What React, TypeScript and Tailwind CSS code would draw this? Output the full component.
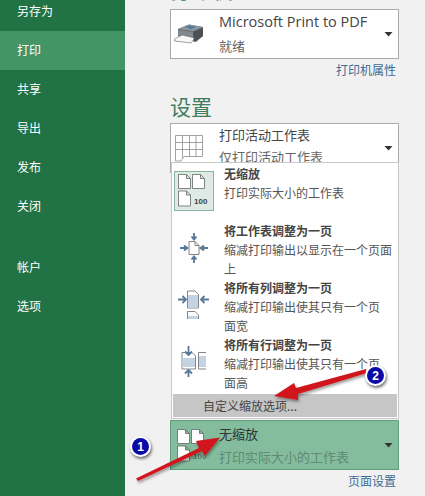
const CJK = "font-['Noto_Sans_CJK_SC','Noto_Sans',sans-serif]";

function Caret() {
  return (
    <svg width="9" height="6" viewBox="0 0 9 6" className="shrink-0">
      <path d="M0.5 1H8.5L4.5 5.5Z" fill="#333" />
    </svg>
  );
}

function Printer() {
  return (
    <svg width="30" height="20" viewBox="0 0 30 20">
      <path d="M4 5 L15 0.5 L29 3 L29 12 L22 18 L4 12Z" fill="#666c72" />
      <path d="M4 5 L15 0.5 L29 3 L19 7Z" fill="#8f979e" />
      <path d="M11 3 L16 1.5 L22 3 L17 5Z" fill="#4b7aa3" />
      <path d="M4 6 L19 8 L19 15 L4 11Z" fill="#82888e" />
      <path d="M0.5 15 L8 11 L21 14 L17 19 L0.5 17Z" fill="#f7f7f7" stroke="#666" strokeWidth="0.6" />
      <path d="M19 8 L29 4 L29 12 L20 18Z" fill="#4c5156" />
    </svg>
  );
}

function SheetIcon() {
  return (
    <svg width="29" height="27" viewBox="0 0 29 27" fill="none" stroke="#999" strokeWidth="0.9">
      <path d="M0.5 0.5H27.5V21.5H9L6 26H0.5Z" fill="#fff" />
      <path d="M0.5 7.5H27.5M0.5 14.5H27.5M7.5 0.5V23M14.5 0.5V21.5M21 0.5V21.5" />
    </svg>
  );
}

function Page({ x, y, w = 12, h = 14, fill = "#fff" }: { x: number; y: number; w?: number; h?: number; fill?: string }) {
  return (
    <path
      d={`M${x} ${y}H${x + w - 4}L${x + w} ${y + 4}V${y + h}H${x}Z M${x + w - 4} ${y}V${y + 4}H${x + w}`}
      fill={fill}
      stroke="#666"
      strokeWidth="0.8"
    />
  );
}

function NoScale({ muted }: { muted?: boolean }) {
  return (
    <svg width="34" height="36" viewBox="0 0 34 36">
      <Page x={1.5} y={1.5} />
      <Page x={15.5} y={1.5} />
      <Page x={1.5} y={18} h={15} />
      <text x="17" y="31" fontSize="8" fontWeight="700" fill="#444" fontFamily="Liberation Sans, sans-serif" opacity={muted ? 0.6 : 1}>
        100
      </text>
    </svg>
  );
}

const BLUE = "#56789a";

function Arrow({ d }: { d: string }) {
  return <path d={d} fill="none" stroke={BLUE} strokeWidth="1.8" />;
}

function FitPage() {
  return (
    <svg width="28" height="30" viewBox="0 0 28 30">
      <Page x={9} y={8.5} w={10} h={13} />
      <Arrow d="M14 0V6M11.5 3.5L14 6.5L16.5 3.5" />
      <Arrow d="M14 30V24M11.5 26.5L14 23.5L16.5 26.5" />
      <Arrow d="M0 15H7M4 12.5L7.5 15L4 17.5" />
      <Arrow d="M28 15H21M24 12.5L20.5 15L24 17.5" />
    </svg>
  );
}

function FitColumns() {
  return (
    <svg width="32" height="29" viewBox="0 0 32 29">
      <path d="M9.5 1H17L20.5 4.5V18H9.5Z" fill="#fff" stroke="#666" strokeWidth="0.8" />
      <rect x="10" y="5" width="10" height="13" fill="#c3d3e4" />
      <path d="M9.5 29V21.5H17L20.5 25V29" fill="#fff" stroke="#666" strokeWidth="0.8" />
      <rect x="10" y="26" width="10" height="3" fill="#c3d3e4" />
      <Arrow d="M0 9.5H8M4.5 6L8 9.5L4.5 13" />
      <Arrow d="M31 9.5H23M26.5 6L23 9.5L26.5 13" />
    </svg>
  );
}

function FitRows() {
  return (
    <svg width="26" height="32" viewBox="0 0 26 32">
      <path d="M1 6.5H11L14.5 10V23H1Z" fill="#fff" stroke="#666" strokeWidth="0.8" />
      <rect x="1.5" y="12" width="12.5" height="9" fill="#c3d3e4" />
      <path d="M25 6.5H17.5V23H25" fill="#fff" stroke="#666" strokeWidth="0.8" />
      <rect x="18" y="10" width="7" height="11" fill="#c3d3e4" />
      <Arrow d="M7.5 0V9M4 5.5L7.5 9L11 5.5" />
      <Arrow d="M7.5 31V24M4 27.5L7.5 24L11 27.5" />
    </svg>
  );
}

function NavItem({ label, active }: { label: string; active?: boolean }) {
  return (
    <div className={`h-[39px] flex items-center pl-[17px] pb-[2px] text-[12px] text-white ${active ? "bg-[#439467]" : ""}`}>
      {label}
    </div>
  );
}

function MenuRow({ icon, title, desc, h, iconTop }: { icon: React.ReactNode; title: string; desc: React.ReactNode; h: string; iconTop: string }) {
  return (
    <div className={`flex ${h}`}>
      <div className={`w-[44px] mr-[8px] flex justify-center shrink-0 ${iconTop}`}>{icon}</div>
      <div className="leading-[19px] text-[12px] text-[#555] -mt-[1px]">
        <div className="font-bold text-[#444]">{title}</div>
        <div>{desc}</div>
      </div>
    </div>
  );
}

function Badge({ n, className }: { n: number; className: string }) {
  return (
    <div
      className={`absolute w-[21px] h-[21px] rounded-full bg-[#0a0aa8] border-2 border-white shadow-[1px_2px_3px_rgba(0,0,0,0.55)] flex items-center justify-center text-white text-[12px] font-bold font-['Liberation_Sans',sans-serif] ${className}`}
    >
      {n}
    </div>
  );
}

export default function App() {
  return (
    <div className={`relative w-[425px] h-[496px] overflow-hidden flex bg-[#f1f1f1] ${CJK}`}>
      <aside className="w-[125px] shrink-0 bg-[#217346]">
        <div className="-mt-[8px]">
          <NavItem label="另存为" />
          <NavItem label="打印" active />
          <NavItem label="共享" />
          <NavItem label="导出" />
          <NavItem label="发布" />
          <NavItem label="关闭" />
          <div className="h-[22px]" />
          <NavItem label="帐户" />
          <NavItem label="选项" />
        </div>
      </aside>

      <main className="flex-1 pl-[45px]">
        <div className="w-[229px]">
          <div className="h-[9px] overflow-hidden relative">
            <div className="absolute -top-[23px] left-0 text-[21px] leading-[24px] text-[#3f7d5c]">打印机</div>
          </div>
          <div className="h-[50px] bg-white border border-[#ababab] flex items-center">
            <div className="w-[48px] pl-[3px] flex justify-start shrink-0">
              <Printer />
            </div>
            <div className="flex-1">
              <div className="text-[14.5px] leading-[18px] -mt-[1px] font-['Open_Sans',sans-serif] text-[#444]">Microsoft Print to PDF</div>
              <div className="text-[13px] leading-[16px] mt-[7px] text-[#666]">就绪</div>
            </div>
            <div className="pr-[5px]">
              <Caret />
            </div>
          </div>
          <div className="text-right text-[12px] leading-[16px] text-[#3d6d94] pr-[3px] mt-[3px]">打印机属性</div>
          <div className="text-[21px] leading-[24px] text-[#3f7d5c] mt-[16px]">设置</div>
          <div className="h-[50px] mt-[5px] bg-white border border-[#ababab] flex items-start">
            <div className="w-[48px] pl-[4px] flex justify-start pt-[11px] shrink-0">
              <SheetIcon />
            </div>
            <div className="flex-1 pt-[1px]">
              <div className="text-[13px] leading-[20px] text-[#444]">打印活动工作表</div>
              <div className="text-[13px] leading-[16px] mt-[4px] text-[#666]">仅打印活动工作表</div>
            </div>
            <div className="pr-[5px] pt-[21px]">
              <Caret />
            </div>
          </div>
        </div>
      </main>

      <div className="absolute left-[171px] top-[162px] w-[228px] h-[257px] bg-white border border-[#c8c8c8] flex flex-col">
        <div className="pt-[2px]">
          <MenuRow
            h="h-[57px]"
            iconTop="pt-[6px]"
            title="无缩放"
            desc="打印实际大小的工作表"
            icon={
              <div className="w-[40px] h-[40px] bg-[#deebe4] border border-[#8ab49d] flex items-center justify-center">
                <NoScale />
              </div>
            }
          />
          <MenuRow h="h-[57px]" iconTop="pt-[11px]" title="将工作表调整为一页" desc={<>缩减打印输出以显示在一个页面<br />上</>} icon={<FitPage />} />
          <MenuRow h="h-[57px]" iconTop="pt-[11px]" title="将所有列调整为一页" desc={<>缩减打印输出使其只有一个页<br />面宽</>} icon={<FitColumns />} />
          <MenuRow h="h-[58px]" iconTop="pt-[10px]" title="将所有行调整为一页" desc={<>缩减打印输出使其只有一个页<br />面高</>} icon={<FitRows />} />
        </div>
        <div className="mt-auto mb-[1px] mx-[1px] h-[25px] bg-[#c6c6c6] flex items-center text-[12px] text-[#444] pl-[30px]">
          自定义缩放选项...
        </div>
      </div>

      <div className="absolute left-[170px] top-[420px] w-[229px] h-[50px] bg-[#84bd9d] border border-[#5f9f7e] flex items-center">
        <div className="w-[48px] pl-[5px] pt-[1px] shrink-0 overflow-hidden">
          <NoScale muted />
        </div>
        <div className="flex-1">
          <div className="text-[13px] leading-[18px] text-[#333]">无缩放</div>
          <div className="text-[13px] leading-[18px] mt-[5px] text-[#5f8a73]">打印实际大小的工作表</div>
        </div>
        <div className="pr-[5px]">
          <Caret />
        </div>
      </div>

      <div className="absolute left-[170px] top-[473px] w-[229px] pr-[3px] text-right text-[12px] leading-[16px] text-[#3d6d94]">页面设置</div>

      <svg width="425" height="496" viewBox="0 0 425 496" className="absolute left-0 top-0 pointer-events-none">
        <defs>
          <filter id="s" x="-20%" y="-20%" width="140%" height="140%">
            <feDropShadow dx="1" dy="2" stdDeviation="1.5" floodColor="#000" floodOpacity="0.4" />
          </filter>
        </defs>
        <g fill="#d0161e" filter="url(#s)">
          <path d="M136 478.5 L199 448 L196 441 L220 437.5 L205 456 L202 451 L138 481Z" />
          <path d="M366 369 L296 388 L294 383 L274 396 L298 400 L298 394 L367 373Z" />
        </g>
      </svg>

      <Badge n={1} className="left-[130px] top-[436px]" />
      <Badge n={2} className="left-[365px] top-[365px]" />
    </div>
  );
}
